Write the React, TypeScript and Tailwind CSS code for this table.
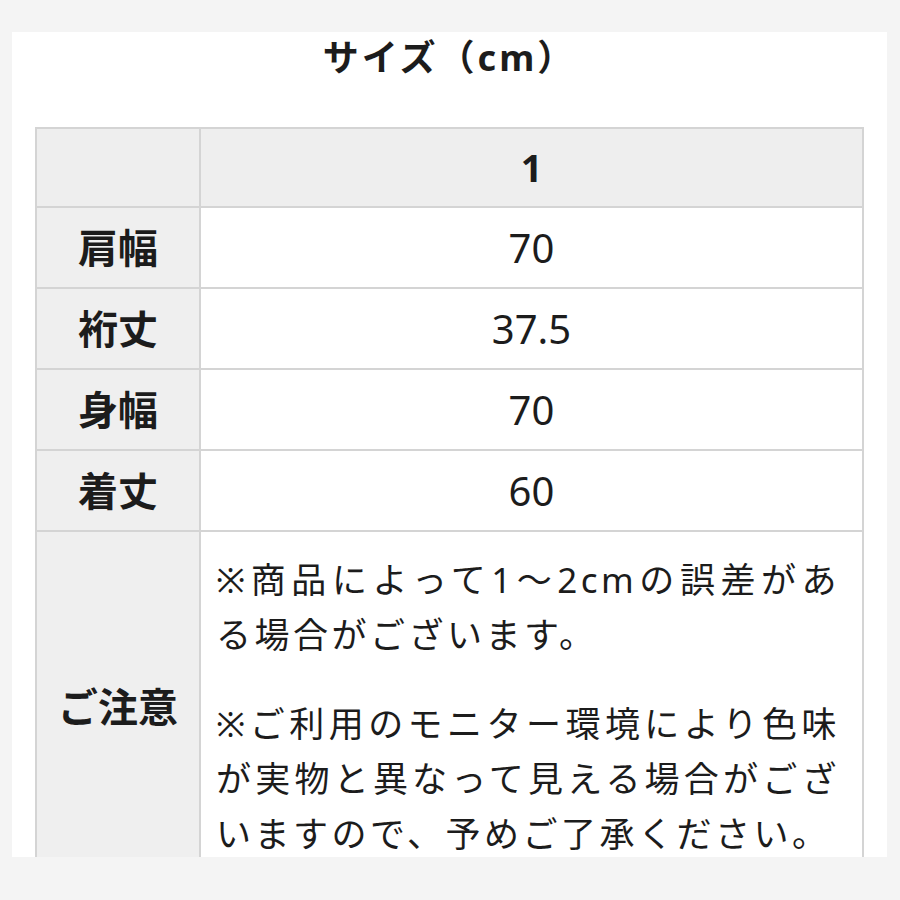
const FONT = '"Noto Sans", "Noto Sans CJK JP", sans-serif';

const rows = [
  { label: '肩幅', value: '70' },
  { label: '裄丈', value: '37.5' },
  { label: '身幅', value: '70' },
  { label: '着丈', value: '60' },
];

export default function App() {
  return (
    <div className="w-[900px] h-[900px] bg-[#f4f4f4] pt-[32px] pl-[12px] text-[#1c1c1c]" style={{ fontFamily: FONT }}>
      <div className="w-[875px] h-[825px] bg-white overflow-hidden">
        {/* タイトル */}
        <div className="h-[52px] flex items-center justify-center text-[36px] font-bold tracking-[3px]">
          サイズ（cm）
        </div>

        {/* サイズ表 */}
        <div className="mt-[43px] ml-[23px] w-[829px] border-t-2 border-l-2 border-[#d4d4d4]">
          <div className="grid grid-cols-[164px_1fr] h-[79px]">
            <div className="bg-[#eeeeee] border-r-2 border-b-2 border-[#d4d4d4]" />
            <div className="bg-[#eeeeee] border-r-2 border-b-2 border-[#d4d4d4] flex items-center justify-center text-[38px] font-bold">
              1
            </div>
          </div>

          {rows.map(row => (
            <div key={row.label} className="grid grid-cols-[164px_1fr] h-[81px]">
              <div className="bg-[#efefef] border-r-2 border-b-2 border-[#d4d4d4] flex items-center justify-center text-[40px] font-bold">
                {row.label}
              </div>
              <div className="border-r-2 border-b-2 border-[#d4d4d4] flex items-center justify-center text-[40px]">
                {row.value}
              </div>
            </div>
          ))}

          <div className="grid grid-cols-[164px_1fr]">
            <div className="bg-[#efefef] border-r-2 border-b-2 border-[#d4d4d4] flex items-center justify-center text-[40px] font-bold">
              ご注意
            </div>
            <div className="border-r-2 border-b-2 border-[#d4d4d4] pl-[15px] pr-[22px] pt-[20px] pb-[20px] text-[35px] leading-[55px] tracking-[3.5px] whitespace-nowrap">
              <div>
                <span className="block [text-align-last:justify]">※商品によって1～2cmの誤差があ</span>
                <span className="block">る場合がございます。</span>
              </div>
              <div className="mt-[34px]">
                <span className="block [text-align-last:justify]">※ご利用のモニター環境により色味</span>
                <span className="block [text-align-last:justify]">が実物と異なって見える場合がござ</span>
                <span className="block">いますので、予めご了承ください。</span>
              </div>
            </div>
          </div>
        </div>
      </div>
    </div>
  );
}
